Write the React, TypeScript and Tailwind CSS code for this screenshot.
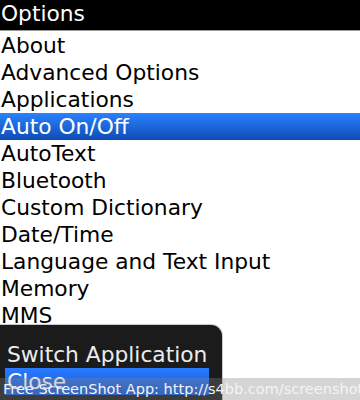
const items = [
  "About",
  "Advanced Options",
  "Applications",
  "Auto On/Off",
  "AutoText",
  "Bluetooth",
  "Custom Dictionary",
  "Date/Time",
  "Language and Text Input",
  "Memory",
  "MMS",
  "Mobile Network",
  "Owner",
];

const selected = "Auto On/Off";

const App = () => {
  return (
    <div
      className="relative w-[360px] h-[400px] overflow-hidden bg-white"
      style={{ fontFamily: '"DejaVu Sans", sans-serif' }}
    >
      {/* title bar */}
      <div className="h-[31px] bg-black text-white text-[21.75px] leading-[28px] pl-[1px] border-b border-[#9a9a9a]">
        Options
      </div>
      <div className="h-[1px] bg-white" />

      {/* option list */}
      <ul className="flex flex-col">
        {items.map((item) => (
          <li
            key={item}
            className={`h-[27px] text-[21.75px] leading-[27px] pl-[1px] whitespace-nowrap ${
              item === selected
                ? "bg-gradient-to-b from-[#2a82ff] to-[#0f4cb4] text-white"
                : "text-black"
            }`}
          >
            {item}
          </li>
        ))}
      </ul>

      {/* menu popup */}
      <div className="absolute left-[-12px] top-[325px] w-[234px] h-[100px] bg-[#1b1b1b] rounded-tr-[11px] rounded-tl-[11px] ring-1 ring-[#c8c8c8] pl-[17px] pr-[13px] pt-[17px]">
        <div className="h-[26px] text-[21.75px] leading-[26px] text-[#ececec] pl-[2px] whitespace-nowrap">
          Switch Application
        </div>
        <div className="h-[27px] text-[21.75px] leading-[27px] text-white pl-[2px] bg-gradient-to-b from-[#2a7bff] to-[#1459d8]">
          Close
        </div>
      </div>

      {/* watermark */}
      <div className="absolute left-0 right-0 bottom-0 h-[22px] bg-[rgba(128,128,128,0.33)] text-[14.5px] leading-[22px] text-[#f4f4f4] pl-[3px] whitespace-nowrap">
        Free ScreenShot App: http://s4bb.com/screenshot
      </div>
    </div>
  );
};

export default App;
